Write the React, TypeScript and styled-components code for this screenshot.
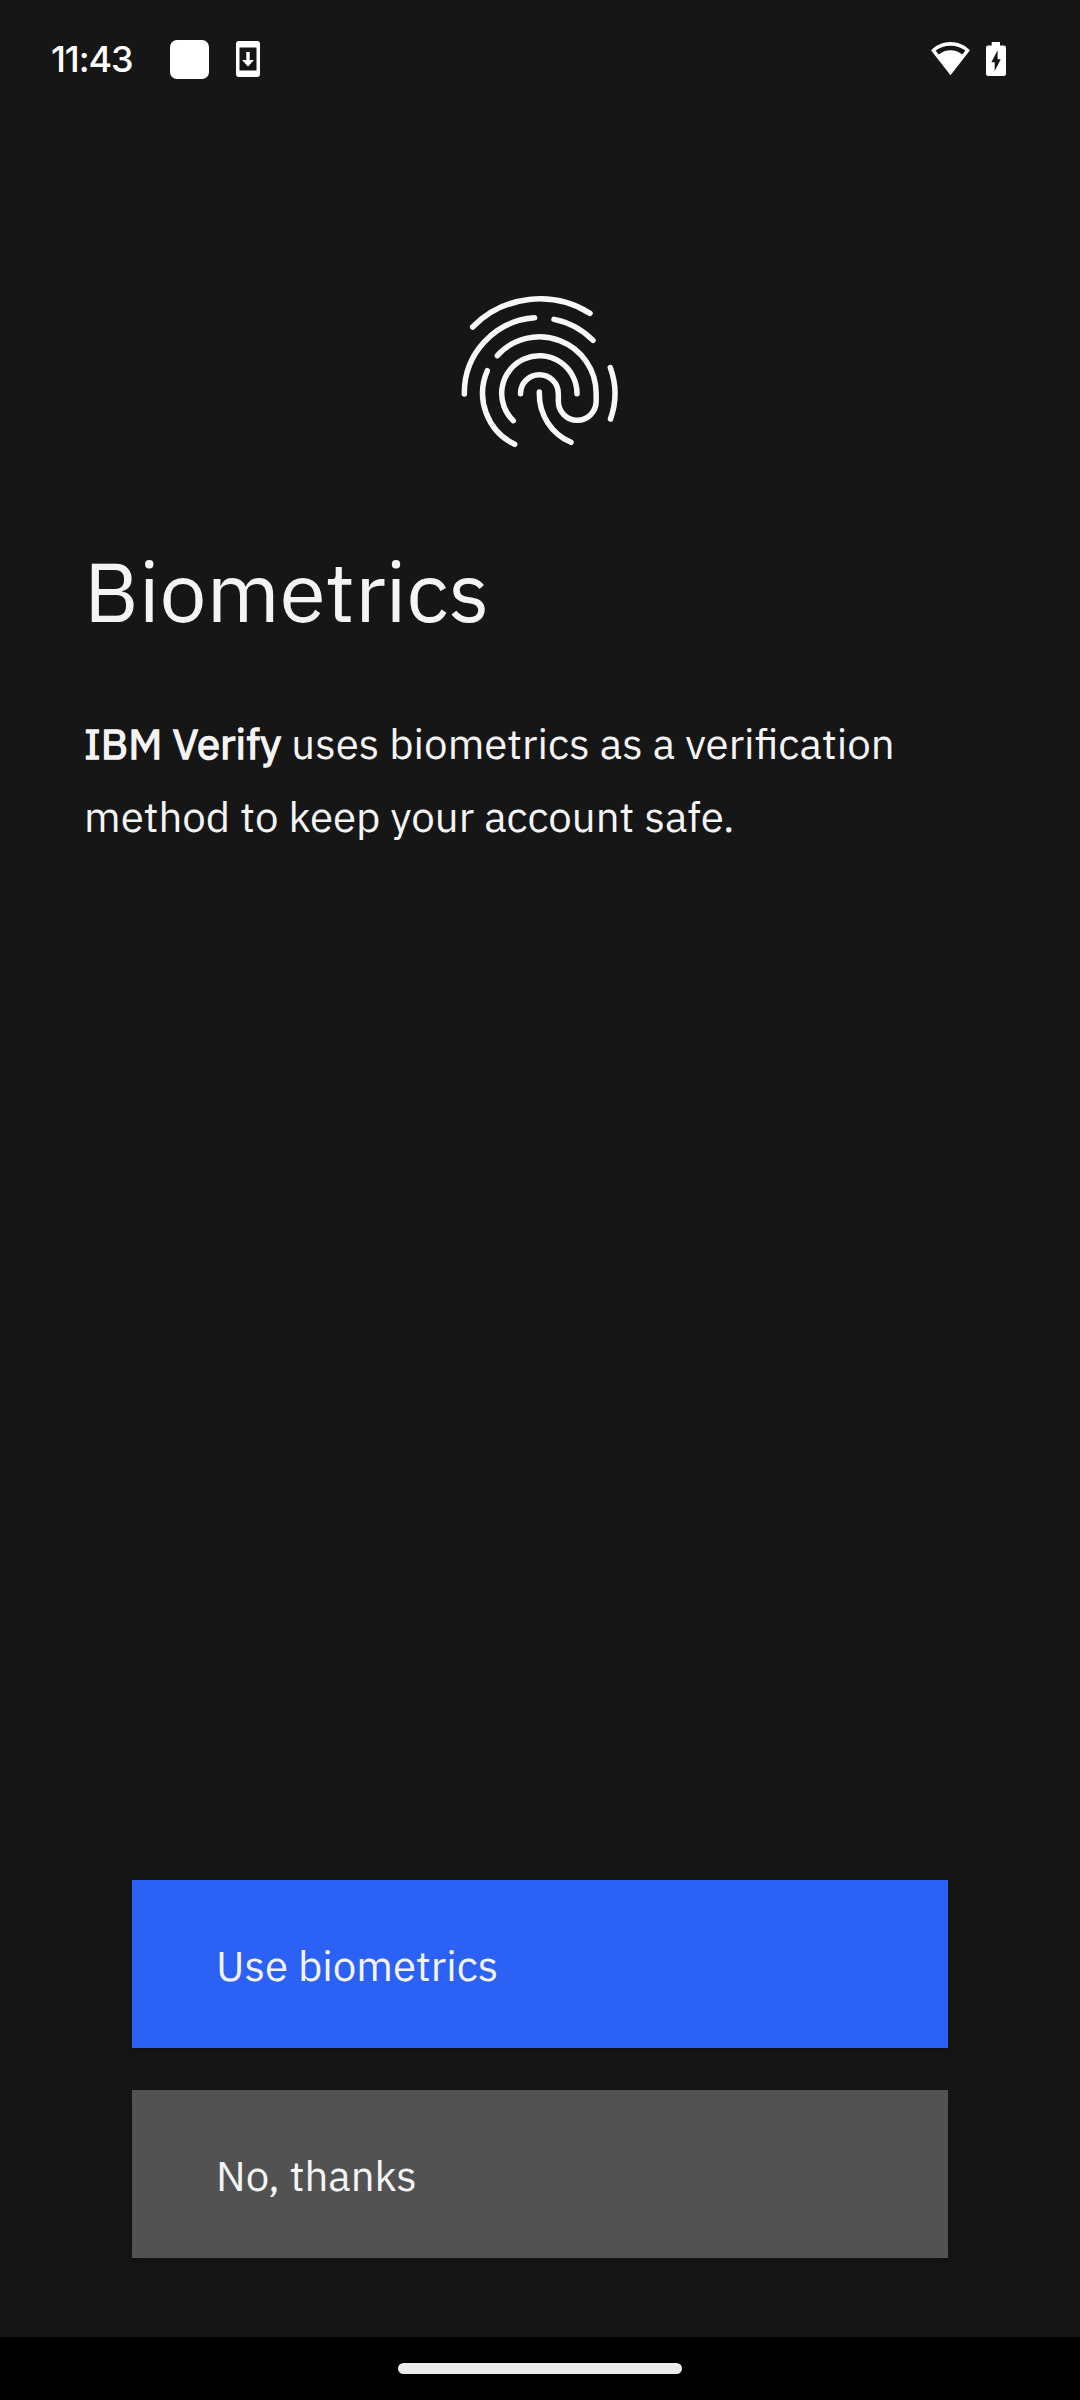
import React from 'react';
import styled, { createGlobalStyle } from 'styled-components';

const GlobalStyle = createGlobalStyle`
  *, *::before, *::after { box-sizing: border-box; }
  html, body { margin: 0; padding: 0; background: #161616; }
`;

const Screen = styled.div`
  display: flex;
  flex-direction: column;
  width: 1080px;
  height: 2400px;
  overflow: hidden;
  background: #161616;
  color: #f4f4f4;
  font-family: 'IBM Plex Sans', 'Noto Sans', sans-serif;
`;

const StatusBar = styled.header`
  display: flex;
  align-items: center;
  height: 118px;
  padding: 0 74px 0 51px;
  color: #ffffff;
`;

const Clock = styled.time`
  width: 119px;
  font-family: 'Google Sans', Inter, sans-serif;
  font-size: 36px;
  font-weight: 550;
  line-height: 44px;
  letter-spacing: -1.1px;
  white-space: nowrap;
`;

const AppDot = styled.span`
  width: 39px;
  height: 39px;
  margin-right: 27px;
  border-radius: 7px;
  background: #ffffff;
`;

const StatusRight = styled.div`
  display: flex;
  align-items: center;
  gap: 16px;
  margin-left: auto;
`;

const Hero = styled.div`
  display: flex;
  justify-content: center;
  padding-top: 162px;
`;

const Fingerprint = styled.svg`
  width: 200px;
  height: 180px;
  fill: none;
  stroke: #f7f7f7;
  stroke-width: 16.5px;
  stroke-linecap: round;
  filter: blur(0.5px);
`;

const Content = styled.main`
  display: flex;
  flex-direction: column;
  padding: 0 84px;
`;

const Title = styled.h1`
  margin: 77px 0 0;
  font-size: 84px;
  font-weight: 400;
  line-height: 108px;
  letter-spacing: -0.15px;
  white-space: nowrap;
`;

const Message = styled.p`
  margin: 62px 0 0;
  font-size: 42px;
  font-weight: 400;
  line-height: 73px;
  word-spacing: 0.2px;
  white-space: nowrap;
`;

const Product = styled.strong`
  font-weight: 400;
  letter-spacing: 0.05px;
  -webkit-text-stroke: 1.4px #f4f4f4;
`;

const Actions = styled.div`
  display: flex;
  flex-direction: column;
  gap: 42px;
  margin-top: auto;
  padding: 0 132px 79px;
`;

const ActionButton = styled.button<{ $tone: string }>`
  display: flex;
  align-items: center;
  height: 168px;
  padding: 3px 84px 0;
  border: 0;
  border-radius: 0;
  background: ${({ $tone }) => $tone};
  box-shadow: 0 3px 8px rgba(0, 0, 0, 0.3);
  color: #f4f4f4;
  font: 400 42px/60px 'IBM Plex Sans', 'Noto Sans', sans-serif;
  white-space: nowrap;
`;

const NavBar = styled.footer`
  display: flex;
  justify-content: center;
  height: 63px;
  padding-top: 26px;
  background: #000000;
`;

const NavHandle = styled.span`
  width: 284px;
  height: 11px;
  border-radius: 6px;
  background: #ebebeb;
`;

const UpdateIcon = () => (
  <svg width="24" height="36" viewBox="0 0 24 36">
    <path
      fill="#fff"
      fillRule="evenodd"
      d="M3 0H21Q24 0 24 3V33Q24 36 21 36H3Q0 36 0 33V3Q0 0 3 0ZM3.5 6.5V29.5H20.5V6.5Z"
    />
    <path fill="#fff" d="M10.3 11H13.7V19H18L12 25.5L6 19H10.3Z" />
  </svg>
);

const WifiIcon = () => (
  <svg width="39" height="34" viewBox="0 0 39 34">
    <path
      fill="#fff"
      fillRule="evenodd"
      d="M19.5 0C27 0 33.8 3 39 8.3L19.5 33.3L0 8.3C5.2 3 12 0 19.5 0ZM4.6 8.6L7.6 12.6Q13 8.2 19.5 8.2Q26 8.2 31.4 12.6L34.4 8.6Q27.8 3.8 19.5 3.8Q11.2 3.8 4.6 8.6Z"
    />
  </svg>
);

const BatteryIcon = () => (
  <svg width="20" height="34" viewBox="0 0 20 34">
    <path
      fill="#fff"
      fillRule="evenodd"
      d="M5.7 0H14V3.5H17.8Q20 3.5 20 5.7V31.8Q20 34 17.8 34H2.2Q0 34 0 31.8V5.7Q0 3.5 2.2 3.5H5.7ZM11.6 8.3L5.4 20.2H8.7V29L14.7 17.2H11.6Z"
    />
  </svg>
);

const FingerprintIcon = () => (
  <Fingerprint viewBox="0 0 600 540">
    <path d="M98 141A283 283 0 0 1 450 100" />
    <path d="M73 342A226 226 0 0 1 284 113.500" />
    <path d="M342 118A226 226 0 0 1 459 181" />
    <path d="M511 263A227 227 0 0 1 511.500 417" />
    <path d="M142 272A170 170 0 0 0 224 493" />
    <path d="M411 341A113 113 0 1 0 220 422" />
    <path d="M241.500 341A56.750 56.750 0 0 1 355 341V364A56.750 56.750 0 0 0 468.500 364V340A170 170 0 0 0 172 227" />
    <path d="M298 336V340A157 157 0 0 0 393 487" />
  </Fingerprint>
);

export default function App() {
  return (
    <>
      <GlobalStyle />
      <Screen>
        <StatusBar>
          <Clock>11:43</Clock>
          <AppDot />
          <UpdateIcon />
          <StatusRight>
            <WifiIcon />
            <BatteryIcon />
          </StatusRight>
        </StatusBar>
        <Hero>
          <FingerprintIcon />
        </Hero>
        <Content>
          <Title>Biometrics</Title>
          <Message>
            <Product>IBM Verify</Product> uses biometrics as a verification
            <br />
            method to keep your account safe.
          </Message>
        </Content>
        <Actions>
          <ActionButton $tone="#2c61f6">Use biometrics</ActionButton>
          <ActionButton $tone="#525252">No, thanks</ActionButton>
        </Actions>
        <NavBar>
          <NavHandle />
        </NavBar>
      </Screen>
    </>
  );
}
